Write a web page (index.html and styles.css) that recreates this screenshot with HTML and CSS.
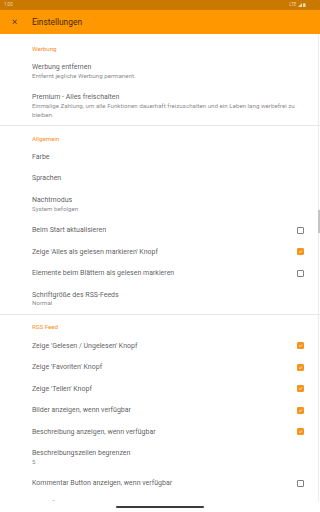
FILE: index.html
```html
<!DOCTYPE html>
<html lang="de">
<head>
    <meta charset="UTF-8">
    <meta name="viewport" content="width=device-width, initial-scale=1.0">
    <title>Einstellungen</title>
    <link rel="stylesheet" href="styles.css">
</head>
<body>
<div class="screen">

    <!-- Status bar -->
    <div class="statusbar">
        <span class="time">1:00</span>
        <span class="sys">
            LTE
            <svg class="signal" viewBox="0 0 4 4"><path d="M4 0V4H0Z" fill="currentColor"/></svg>
            <svg class="battery" viewBox="0 0 3 5"><rect x="0.8" y="0" width="1.4" height="0.6" fill="currentColor"/><rect x="0" y="0.5" width="3" height="4.5" rx="0.3" fill="currentColor"/></svg>
        </span>
    </div>

    <!-- Toolbar -->
    <header class="appbar">
        <svg class="close" viewBox="0 0 24 24"><path d="M19 6.41 17.59 5 12 10.59 6.41 5 5 6.41 10.59 12 5 17.59 6.41 19 12 13.41 17.59 19 19 17.59 13.41 12z" fill="currentColor"/></svg>
        <h1>Einstellungen</h1>
    </header>

    <main class="list">

        <section class="group">
            <h2 class="cat">Werbung</h2>
            <div class="pref">
                <div class="text">
                    <div class="title">Werbung entfernen</div>
                    <div class="summary">Entfernt jegliche Werbung permanent.</div>
                </div>
            </div>
            <div class="pref">
                <div class="text">
                    <div class="title">Premium - Alles freischalten</div>
                    <div class="summary">Einmalige Zahlung, um alle Funktionen dauerhaft freizuschalten und ein Leben lang werbefrei zu bleiben.</div>
                </div>
            </div>
        </section>

        <section class="group">
            <h2 class="cat">Allgemein</h2>
            <div class="pref"><div class="text"><div class="title">Farbe</div></div></div>
            <div class="pref"><div class="text"><div class="title">Sprachen</div></div></div>
            <div class="pref">
                <div class="text">
                    <div class="title">Nachtmodus</div>
                    <div class="summary">System befolgen</div>
                </div>
            </div>
            <div class="pref">
                <div class="text"><div class="title">Beim Start aktualisieren</div></div>
                <span class="box"></span>
            </div>
            <div class="pref">
                <div class="text"><div class="title">Zeige 'Alles als gelesen markieren' Knopf</div></div>
                <span class="box on"><svg viewBox="0 0 10 10"><path d="M2 5.2 4.2 7.3 8.2 3" fill="none" stroke="#fff" stroke-width="1.6"/></svg></span>
            </div>
            <div class="pref">
                <div class="text"><div class="title">Elemente beim Blättern als gelesen markieren</div></div>
                <span class="box"></span>
            </div>
            <div class="pref">
                <div class="text">
                    <div class="title">Schriftgröße des RSS-Feeds</div>
                    <div class="summary">Normal</div>
                </div>
            </div>
        </section>

        <section class="group">
            <h2 class="cat">RSS Feed</h2>
            <div class="pref">
                <div class="text"><div class="title">Zeige 'Gelesen / Ungelesen' Knopf</div></div>
                <span class="box on"><svg viewBox="0 0 10 10"><path d="M2 5.2 4.2 7.3 8.2 3" fill="none" stroke="#fff" stroke-width="1.6"/></svg></span>
            </div>
            <div class="pref">
                <div class="text"><div class="title">Zeige 'Favoriten' Knopf</div></div>
                <span class="box on"><svg viewBox="0 0 10 10"><path d="M2 5.2 4.2 7.3 8.2 3" fill="none" stroke="#fff" stroke-width="1.6"/></svg></span>
            </div>
            <div class="pref">
                <div class="text"><div class="title">Zeige 'Teilen' Knopf</div></div>
                <span class="box on"><svg viewBox="0 0 10 10"><path d="M2 5.2 4.2 7.3 8.2 3" fill="none" stroke="#fff" stroke-width="1.6"/></svg></span>
            </div>
            <div class="pref">
                <div class="text"><div class="title">Bilder anzeigen, wenn verfügbar</div></div>
                <span class="box on"><svg viewBox="0 0 10 10"><path d="M2 5.2 4.2 7.3 8.2 3" fill="none" stroke="#fff" stroke-width="1.6"/></svg></span>
            </div>
            <div class="pref">
                <div class="text"><div class="title">Beschreibung anzeigen, wenn verfügbar</div></div>
                <span class="box on"><svg viewBox="0 0 10 10"><path d="M2 5.2 4.2 7.3 8.2 3" fill="none" stroke="#fff" stroke-width="1.6"/></svg></span>
            </div>
            <div class="pref">
                <div class="text">
                    <div class="title">Beschreibungszeilen begrenzen</div>
                    <div class="summary">5</div>
                </div>
            </div>
            <div class="pref">
                <div class="text"><div class="title">Kommentar Button anzeigen, wenn verfügbar</div></div>
                <span class="box"></span>
            </div>
            <div class="pref">
                <div class="text"><div class="title">In der Übersicht anzeigen</div></div>
                <span class="box on"><svg viewBox="0 0 10 10"><path d="M2 5.2 4.2 7.3 8.2 3" fill="none" stroke="#fff" stroke-width="1.6"/></svg></span>
            </div>
        </section>

    </main>

    <!-- Scrollbar -->
    <div class="scrollbar"><div class="thumb"></div></div>

    <!-- Gesture nav -->
    <div class="navbar"><span class="handle"></span></div>

</div>
</body>
</html>
```

FILE: styles.css
```css
* {
    box-sizing: border-box;
}

body {
    margin: 0;
    background: #fff;
    font-family: Roboto, "Noto Sans", sans-serif;
}

.screen {
    position: relative;
    width: 320px;
    height: 512px;
    overflow: hidden;
}

/* Status bar */
.statusbar {
    height: 10px;
    background: #c97800;
    display: flex;
    align-items: center;
    justify-content: space-between;
    padding: 0 14px 0 4px;
    color: rgba(255, 255, 255, 0.7);
    font-size: 4.5px;
    line-height: 1;
}

.sys {
    display: flex;
    align-items: center;
    gap: 1.5px;
}

.signal {
    width: 4px;
    height: 4px;
}

.battery {
    width: 2.6px;
    height: 4.5px;
}

/* Toolbar */
.appbar {
    height: 24px;
    background: #ff9800;
    display: flex;
    align-items: center;
    padding-left: 11px;
}

.close {
    width: 7.5px;
    height: 7.5px;
    color: #3a2a10;
}

.appbar h1 {
    margin: 0 0 0 13.5px;
    font-size: 8.4px;
    font-weight: 400;
    color: rgba(0, 0, 0, 0.8);
}

/* Preference list */
.list {
    padding-top: 2.2px;
}

.group + .group {
    border-top: 1px solid #e6e6e6;
}

.cat {
    margin: 0;
    padding: 8.6px 16px 2.5px 32px;
    font-size: 6.2px;
    line-height: 8.7px;
    font-weight: 400;
    color: #f68f1e;
}

.pref {
    display: flex;
    align-items: center;
    padding: 7px 14px 5.8px 32px;
}

.text {
    flex: 1;
}

.title {
    font-size: 7px;
    line-height: 8.7px;
    color: rgba(0, 0, 0, 0.68);
}

.summary {
    font-size: 6.2px;
    line-height: 8.7px;
    color: rgba(0, 0, 0, 0.5);
}

.box {
    flex-shrink: 0;
    width: 7px;
    height: 7px;
    margin: 0 2px 0 8px;
    border: 1px solid #808080;
    border-radius: 1px;
}

.box.on {
    background: #f7941d;
    border-color: #f7941d;
}

.box svg {
    display: block;
    width: 100%;
    height: 100%;
}

/* Scrollbar */
.scrollbar {
    position: absolute;
    top: 34px;
    right: 1px;
    bottom: 0;
    width: 1px;
    background: #ececec;
}

.thumb {
    position: absolute;
    top: 176px;
    left: 0;
    width: 2px;
    height: 23px;
    background: #c4c4c4;
}

/* Gesture navigation */
.navbar {
    position: absolute;
    left: 0;
    right: 0;
    bottom: 0;
    height: 10px;
    background: #fff;
}

.handle {
    position: absolute;
    top: 4px;
    left: 116px;
    width: 88px;
    height: 1.5px;
    border-radius: 1px;
    background: #3a3a3a;
}
```
